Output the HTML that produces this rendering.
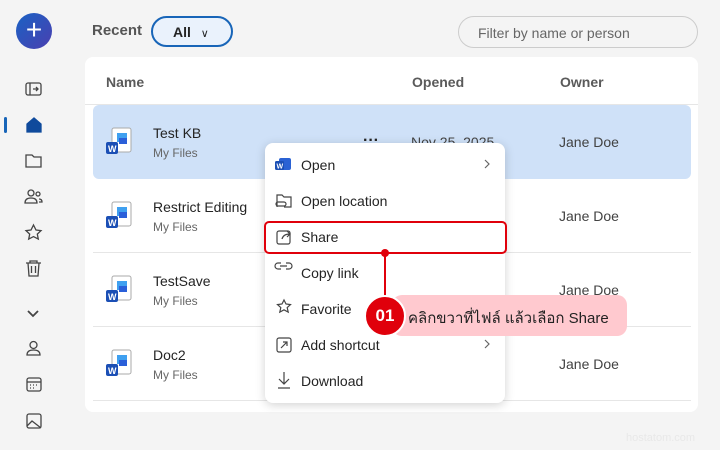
<!DOCTYPE html>
<html><head><meta charset="utf-8"><style>
*{box-sizing:border-box;margin:0;padding:0}
body{width:720px;height:450px;background:#f4f4f4;font-family:"Liberation Sans",sans-serif;position:relative;overflow:hidden;color:#242424}
.abs{position:absolute}
.plus{left:16px;top:13px;width:36px;height:36px;border-radius:50%;background:linear-gradient(135deg,#1a62c4,#4a3fb0);color:#fff;font-size:28px;line-height:34px;text-align:center}
.card{left:85px;top:57px;width:613px;height:355px;background:#fff;border-radius:8px}
.hdr{font-size:14px;color:#5a5a5a;font-weight:bold}
.row{left:93px;width:598px;height:74px;border-bottom:1px solid #e6e6e6}
.t{position:absolute;left:60px;top:20px;font-size:14px;color:#242424}
.s{position:absolute;left:60px;top:41px;font-size:12px;color:#666}
.o{position:absolute;left:466px;top:29px;font-size:14px;color:#424242}
.menu{left:265px;top:143px;width:240px;height:260px;background:#fff;border-radius:8px;box-shadow:0 2px 10px rgba(0,0,0,.18)}
.mi{position:absolute;left:36px;font-size:14px;color:#242424}
</style></head><body>
<div class="abs plus">+</div>
<div class="abs" style="left:92px;top:22px;font-size:15px;color:#555;font-weight:bold">Recent</div>
<div class="abs" style="left:151px;top:16px;width:82px;height:31px;border:2px solid #1865b8;border-radius:16px;background:#eaf2fc;font-size:14px;font-weight:bold;padding:6px 0 0 20px">All <span style="font-weight:normal;font-size:11px;margin-left:6px">&#8744;</span></div>
<div class="abs" style="left:458px;top:16px;width:240px;height:32px;border:1px solid #ccc;border-radius:16px;font-size:14px;color:#666;padding:8px 0 0 19px">Filter by name or person</div>
<div class="abs" style="left:4px;top:117px;width:3px;height:16px;background:#1865b8;border-radius:2px"></div>
<svg class="abs" style="left:0;top:0" width="60" height="450" fill="none" stroke="#444" stroke-width="1.3">
<rect x="26" y="83" width="15" height="12" rx="2"/><line x1="30" y1="83" x2="30" y2="95"/><path d="M33 89h5M36 87l2 2-2 2"/>
<path d="M27 132v-8l7-6 7 6v8z" fill="#0f4a9c" stroke="#0f4a9c"/>
<path d="M26 155h6l2 2h7v10H26z"/>
<circle cx="31" cy="193" r="3"/><path d="M25 203c0-4 3-5 6-5s6 1 6 5z"/><circle cx="38" cy="194" r="2"/><path d="M39 199c2 0 3 1 3 3h-3"/>
<path d="M33.5 225l2.5 5 5 .6-3.7 3.5 1 5-4.8-2.5-4.8 2.5 1-5-3.7-3.5 5-.6z"/>
<path d="M26 263h15M30 263v-2h7v2M28 263l1 13h9l1-13M31.5 266v7M35.5 266v7"/>
<path d="M28 311l5 5 5-5" stroke-width="1.8"/>
<circle cx="33.5" cy="345" r="3.5"/><path d="M27 355c0-4 3-5 6.5-5s6.5 1 6.5 5z"/>
<rect x="27" y="378" width="14" height="13" rx="2"/><line x1="27" y1="382" x2="41" y2="382"/><path d="M30 385h1M33 385h1M36 385h1M30 388h1M33 388h1"/>
<rect x="27" y="414" width="14" height="14" rx="2"/><path d="M27 426l5-5 9 7"/>
</svg>
<div class="abs card"></div>
<div class="abs hdr" style="left:106px;top:74px">Name</div>
<div class="abs hdr" style="left:412px;top:74px">Opened</div>
<div class="abs hdr" style="left:560px;top:74px">Owner</div>
<div class="abs" style="left:85px;top:104px;width:613px;height:1px;background:#e6e6e6"></div>
<div class="abs row" style="top:105px;background:#cfe1f8;border-radius:6px;border:none"><div class="t">Test KB</div><div class="s">My Files</div><div style="position:absolute;left:318px;top:29px;font-size:14px;color:#444">Nov 25, 2025</div><div style="position:absolute;left:270px;top:27px;font-weight:bold">···</div><div class="o">Jane Doe</div></div>
<div class="abs row" style="top:179px"><div class="t">Restrict Editing</div><div class="s">My Files</div><div class="o">Jane Doe</div></div>
<div class="abs row" style="top:253px"><div class="t">TestSave</div><div class="s">My Files</div><div class="o">Jane Doe</div></div>
<div class="abs row" style="top:327px"><div class="t">Doc2</div><div class="s">My Files</div><div class="o">Jane Doe</div></div>
<svg class="abs" style="left:0;top:0" width="140" height="450">
<g id="w"><rect x="112" y="128" width="19" height="24" rx="2" fill="#fff" stroke="#aaa"/><rect x="117" y="133" width="10" height="9" fill="#3fa0f0"/><rect x="119" y="138" width="8" height="6" fill="#2a5fd9"/><rect x="106" y="142" width="12" height="12" rx="2" fill="#1b4fb5"/><text x="108" y="152" fill="#fff" font-size="9" font-weight="bold" font-family="Liberation Sans">W</text></g>
<use href="#w" y="74"/><use href="#w" y="148"/><use href="#w" y="222"/>
</svg>
<div class="abs menu">
<svg class="abs" style="left:0;top:0" width="240" height="260" fill="none" stroke="#444" stroke-width="1.2">
<rect x="14" y="15" width="12" height="12" rx="2" fill="#2a62d4" stroke="none"/><rect x="10" y="18" width="9" height="9" rx="1.5" fill="#1b4fb5" stroke="none"/><text x="11.5" y="25.5" fill="#fff" font-size="7" font-weight="bold" stroke="none" font-family="Liberation Sans">W</text>
<path d="M12 64v-12h5l2 2h7v10h-7M13 59h6a2 2 0 010 4h-6a2 2 0 010-4z"/>
<rect x="12" y="88" width="13" height="13" rx="2"/><path d="M17 96c1-4 4-5 8-5M22 88l3 3-3 3"/>
<path d="M16 126h-3a3 3 0 010-6h3M21 126h3a3 3 0 000-6h-3M15 123h7"/>
<path d="M19 157l2 4 4.5.6-3.3 3 1 4.5-4.2-2.3-4.2 2.3 1-4.5-3.3-3 4.5-.6z"/>
<rect x="12" y="195" width="14" height="14" rx="2"/><path d="M16 205l6-6M18 199h4v4"/>
<path d="M19 229v12M14 236l5 5 5-5M13 245h12"/>
<path d="M220 17l4 4-4 4M220 197l4 4-4 4" stroke="#666"/>
</svg>
<div class="mi" style="top:14px">Open</div>
<div class="mi" style="top:50px">Open location</div>
<div class="mi" style="top:86px">Share</div>
<div class="mi" style="top:122px">Copy link</div>
<div class="mi" style="top:158px">Favorite</div>
<div class="mi" style="top:194px">Add shortcut</div>
<div class="mi" style="top:230px">Download</div>
</div>
<div class="abs" style="left:264px;top:221px;width:243px;height:33px;border:2px solid #e0000b;border-radius:5px"></div>
<div class="abs" style="left:384px;top:252px;width:2px;height:44px;background:#e0000b"></div>
<div class="abs" style="left:381px;top:249px;width:8px;height:8px;border-radius:50%;background:#e0000b"></div>
<div class="abs" style="left:392px;top:295px;width:235px;height:41px;background:#ffc9cf;border-radius:10px;font-family:'Liberation Sans','DejaVu Sans',sans-serif;font-size:15px;color:#222;padding:11px 0 0 16px">คลิกขวาที่ไฟล์ แล้วเลือก Share</div>
<div class="abs" style="left:364px;top:295px;width:42px;height:42px;border-radius:50%;background:#e0000b;border:2px solid #fff;color:#fff;font-weight:bold;font-size:17px;text-align:center;line-height:38px">01</div>
<div class="abs" style="left:626px;top:432px;font-size:11px;color:#e8e8e8">hostatom.com</div>
</body></html>
